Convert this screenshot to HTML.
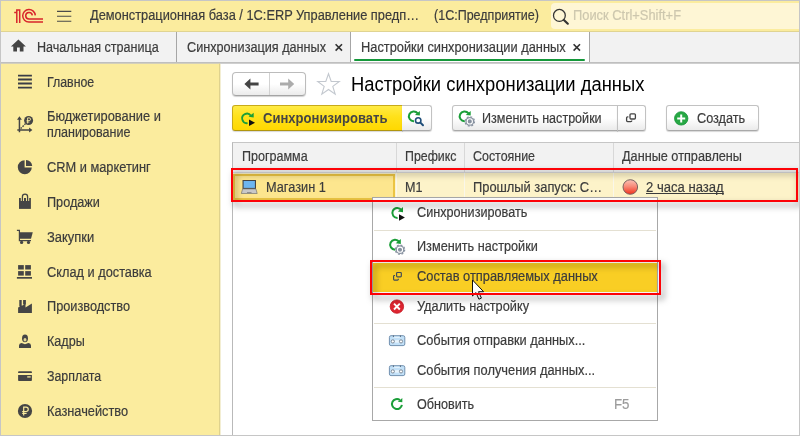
<!DOCTYPE html>
<html lang="ru">
<head>
<meta charset="utf-8">
<title>Настройки синхронизации данных</title>
<style>
*{box-sizing:border-box;margin:0;padding:0}
html,body{width:800px;height:436px;overflow:hidden;background:#fff}
body{font-family:"Liberation Sans",sans-serif;font-size:14px;color:#3c3c3c;position:relative}
.a{position:absolute}
.t{position:absolute;white-space:nowrap;line-height:16px;transform-origin:0 50%;-webkit-text-stroke:.2px currentColor}
#frame{position:absolute;left:0;top:0;width:800px;height:436px;border:1px solid #c6c6c6;pointer-events:none}
#title{position:absolute;left:1px;top:1px;width:798px;height:31px;background:#fbec9e;border-bottom:1px solid #e0d492}
#search{position:absolute;left:551px;top:3px;width:248px;height:26px;background:#fef6d5;border-radius:4px 0 0 4px}
#tabs{position:absolute;left:1px;top:32px;width:798px;height:31px;background:#f2f2f2;border-bottom:1px solid #bfbfbf}
.sep{position:absolute;top:32px;width:1px;height:30px;background:#a6a6a6}
#tab3{position:absolute;left:351px;top:32px;width:238px;height:30px;background:#fff}
#green{position:absolute;left:354px;top:59px;width:231px;height:2px;background:#14983a;border-radius:1px}
#side{position:absolute;left:1px;top:63px;width:219px;height:372px;background:#fbec9e;border-right:1px solid #dfd28e;border-top:1px solid #d3cfbb}
.btn{position:absolute;top:105px;height:26px;border:1px solid #c2c2c2;border-bottom-color:#a9a9a9;border-radius:3px;background:linear-gradient(#ffffff,#ffffff 50%,#ebebeb);box-shadow:0 1px 1px rgba(0,0,0,.16)}
.red{position:absolute;border:2px solid #fd0207;filter:drop-shadow(3px 4px 3px rgba(0,0,0,.5))}
</style>
</head>
<body>
<!-- title bar -->
<div id="title"></div>
<div id="search"></div>
<!-- tabs -->
<div id="tabs"></div>
<div id="tab3"></div>
<div class="sep" style="left:176px"></div>
<div class="sep" style="left:350px"></div>
<div class="sep" style="left:589px"></div>
<div id="green"></div>
<!-- sidebar -->
<div id="side"></div>
<div class="a" style="left:220px;top:63px;width:579px;height:1px;background:#cfcfcf"></div>
<div class="a" style="left:220px;top:64px;width:1px;height:371px;background:#f3eed3"></div>

<!-- nav buttons -->
<div class="a" style="left:232px;top:72px;width:74px;height:24px;border:1px solid #bcbcbc;border-bottom-color:#a4a4a4;border-radius:4px;background:linear-gradient(#fff,#fff 50%,#ebebeb);box-shadow:0 1px 1px rgba(0,0,0,.18)"></div>
<div class="a" style="left:269px;top:73px;width:1px;height:22px;background:#d2d2d2"></div>

<!-- toolbar buttons -->
<div class="btn" style="left:232px;width:171px;background:linear-gradient(#ffeb45,#ffe11a 45%,#ffd800);border-color:#c7aa1a;border-bottom-color:#b0950e;border-radius:3px 0 0 3px"></div>
<div class="btn" style="left:402px;width:30px;border-radius:0 3px 3px 0;border-left:none"></div>
<div class="btn" style="left:452px;width:166px;border-radius:3px 0 0 3px"></div>
<div class="btn" style="left:617px;width:29px;border-radius:0 3px 3px 0"></div>
<div class="btn" style="left:666px;width:93px"></div>

<!-- table -->
<div class="a" style="left:232px;top:142px;width:567px;height:294px;border:1px solid #b9b9b9;border-top-color:#c6c6c6;border-right:none;background:#fff"></div>
<div class="a" style="left:233px;top:143px;width:566px;height:30px;background:#f2f2f2;border-bottom:1px solid #d9d9d9"></div>
<div class="a" style="left:233px;top:173px;width:566px;height:27px;background:#fdf3c9"></div>
<div class="a" style="left:396px;top:143px;width:1px;height:29px;background:#d8d8d8"></div><div class="a" style="left:396px;top:173px;width:1px;height:27px;background:#faf7ea"></div>
<div class="a" style="left:464px;top:143px;width:1px;height:29px;background:#d8d8d8"></div><div class="a" style="left:464px;top:173px;width:1px;height:27px;background:#faf7ea"></div>
<div class="a" style="left:613px;top:143px;width:1px;height:29px;background:#d8d8d8"></div><div class="a" style="left:613px;top:173px;width:1px;height:27px;background:#faf7ea"></div>
<div class="a" style="left:233px;top:174px;width:162px;height:26px;background:#fde68e;border:2px solid #ebc443"></div>


<!-- context menu -->
<div class="a" style="left:372px;top:197px;width:286px;height:224px;background:#fff;border:1px solid #a8a8a8"></div>
<div class="a" style="left:374px;top:230px;width:282px;height:1px;background:#e4e0d2"></div>
<div class="a" style="left:374px;top:323px;width:282px;height:1px;background:#e4e0d2"></div>
<div class="a" style="left:374px;top:387px;width:282px;height:1px;background:#e4e0d2"></div>
<div class="a" style="left:373px;top:263px;width:284px;height:29px;background:#f9ce24"></div>

<div class="t" style="left:90px;top:7px;transform:scaleX(0.9152);">Демонстрационная база / 1С:ERP Управление предп…</div>
<div class="t" style="left:434px;top:7px;transform:scaleX(0.8943);">(1С:Предприятие)</div>
<div class="t" style="left:573px;top:7px;transform:scaleX(0.9201);color:#cdc7ae">Поиск Ctrl+Shift+F</div>
<div class="t" style="left:37px;top:39px;transform:scaleX(0.8987);">Начальная страница</div>
<div class="t" style="left:187px;top:39px;transform:scaleX(0.9039);">Синхронизация данных</div>
<div class="t" style="left:361px;top:39px;transform:scaleX(0.9156);">Настройки синхронизации данных</div>
<div class="t" style="left:47.3px;top:74px;transform:scaleX(0.8822);">Главное</div>
<div class="t" style="left:47.3px;top:108px;transform:scaleX(0.9166);">Бюджетирование и</div>
<div class="t" style="left:47.3px;top:124px;transform:scaleX(0.8960);">планирование</div>
<div class="t" style="left:47.3px;top:159px;transform:scaleX(0.9148);">CRM и маркетинг</div>
<div class="t" style="left:47.3px;top:194px;transform:scaleX(0.9048);">Продажи</div>
<div class="t" style="left:47.3px;top:229px;transform:scaleX(0.9244);">Закупки</div>
<div class="t" style="left:47.3px;top:264px;transform:scaleX(0.9122);">Склад и доставка</div>
<div class="t" style="left:47.3px;top:298px;transform:scaleX(0.9093);">Производство</div>
<div class="t" style="left:47.3px;top:333px;transform:scaleX(0.8983);">Кадры</div>
<div class="t" style="left:47.3px;top:368px;transform:scaleX(0.8840);">Зарплата</div>
<div class="t" style="left:47.3px;top:403px;transform:scaleX(0.9133);">Казначейство</div>
<div class="t" style="left:351px;top:72px;transform:scaleX(0.9191);font-size:20px;line-height:24px;color:#000;-webkit-text-stroke:0">Настройки синхронизации данных</div>
<div class="t" style="left:262.5px;top:110px;transform:scaleX(0.9321);font-weight:bold;color:#454545;-webkit-text-stroke:0">Синхронизировать</div>
<div class="t" style="left:482.25px;top:110px;transform:scaleX(0.8975);">Изменить настройки</div>
<div class="t" style="left:696.5px;top:110px;transform:scaleX(0.9066);">Создать</div>
<div class="t" style="left:241.9px;top:148px;transform:scaleX(0.8956);">Программа</div>
<div class="t" style="left:404.5px;top:148px;transform:scaleX(0.8839);">Префикс</div>
<div class="t" style="left:473px;top:148px;transform:scaleX(0.8875);">Состояние</div>
<div class="t" style="left:622px;top:148px;transform:scaleX(0.9064);">Данные отправлены</div>
<div class="t" style="left:265.7px;top:179px;transform:scaleX(0.9104);">Магазин 1</div>
<div class="t" style="left:404.5px;top:179px;transform:scaleX(0.8996);">М1</div>
<div class="t" style="left:473px;top:179px;transform:scaleX(0.9185);">Прошлый запуск: С…</div>
<div class="t" style="left:646px;top:179px;transform:scaleX(0.9348);text-decoration:underline;text-decoration-skip-ink:none">2 часа назад</div>
<div class="t" style="left:416.7px;top:204px;transform:scaleX(0.9036);">Синхронизировать</div>
<div class="t" style="left:416.7px;top:238px;transform:scaleX(0.9061);">Изменить настройки</div>
<div class="t" style="left:416.7px;top:268px;transform:scaleX(0.9176);">Состав отправляемых данных</div>
<div class="t" style="left:416.7px;top:298px;transform:scaleX(0.9113);">Удалить настройку</div>
<div class="t" style="left:416.7px;top:332px;transform:scaleX(0.9139);">События отправки данных...</div>
<div class="t" style="left:416.7px;top:362px;transform:scaleX(0.9177);">События получения данных...</div>
<div class="t" style="left:416.7px;top:396px;transform:scaleX(0.9000);">Обновить</div>
<div class="t" style="left:613.5px;top:396px;transform:scaleX(0.9484);color:#9b9b9b">F5</div>

<!-- icons -->
<svg class="a" style="left:0;top:0" width="800" height="436" viewBox="0 0 800 436">
<defs>
<linearGradient id="rb" x1="0" y1="0" x2="0" y2="1"><stop offset="0" stop-color="#fbc3b6"/><stop offset=".45" stop-color="#f88c7a"/><stop offset="1" stop-color="#f2311c"/></linearGradient>
</defs>
<!-- 1C logo -->
<g fill="none" stroke="#d8252b" stroke-width="1.5">
<path d="M14.2 12.4H16.8M16.8 22.9V9.9H19.7V22.9"/>
<path d="M35.3 15.4A6.3 6.3 0 1 0 28.9 22.1H43"/>
<path d="M32.3 15.4A3.3 3.3 0 1 0 29 19H43"/>
</g>
<!-- hamburger -->
<path d="M57 11.3H71.3M57 16.2H71.3M57 21.2H71.3" stroke="#4a4a4a" stroke-width="1.15"/>
<!-- search -->
<circle cx="559.4" cy="15.4" r="5.9" fill="none" stroke="#333" stroke-width="1.25"/>
<path d="M563.9 20L567.8 23.7" stroke="#333" stroke-width="2.2" stroke-linecap="round"/>
<!-- home -->
<path d="M18.4 39.6L10.9 46.5H13.3V51.6H17V47.6H19.8V51.6H23.5V46.5H25.9Z" fill="#444"/>
<!-- tab x -->
<path d="M335.6 44.2L342 50.6M342 44.2L335.6 50.6" stroke="#333" stroke-width="1.6"/>
<path d="M573.6 44.2L580 50.6M580 44.2L573.6 50.6" stroke="#333" stroke-width="1.6"/>

<!-- sidebar icons -->
<g fill="#454545" stroke="none">
<path d="M18 74.7H31.9V76.5H18ZM18 78.6H31.9V80.4H18ZM18 82.6H31.9V84.4H18ZM18 86.7H31.9V88.5H18Z" fill="#3a3d46"/>
<!-- budget -->
<path d="M18.7 118.5H20.2V132.2H18.7ZM17 119.8L19.45 116.2L21.9 119.8ZM17.3 129.3H29.8V130.8H17.3ZM29.1 127.6L32.4 130.05L29.1 132.5Z"/>
<circle cx="28.6" cy="120.5" r="4.5"/>
<!-- pie -->
<path d="M24.6 167.4V160.2A7 7 0 1 0 31.8 167.4Z"/>
<path d="M26 166V160A6.2 6.2 0 0 1 32.2 166Z"/>
<!-- bag -->
<rect x="19" y="198" width="11.9" height="10.9"/>
<!-- cart -->
<path d="M19.4 232.2H32.8L31 238.8H19.4Z"/>
<circle cx="21.6" cy="242.4" r="1.6"/><circle cx="28.5" cy="242.4" r="1.6"/>
<!-- grid -->
<rect x="18.1" y="265.1" width="5.7" height="4.4"/><rect x="25.2" y="265.1" width="5.7" height="4.4"/>
<rect x="18.1" y="271.1" width="5.7" height="4.5"/><rect x="25.2" y="271.1" width="5.7" height="4.5"/>
<rect x="16.9" y="277" width="15.1" height="1.7"/>
<!-- factory -->
<path d="M19.3 300H21.7V306.5H19.3ZM23.1 300H25.9V304.5H23.1ZM18.1 313V307.6L25.5 304V307.6L31.9 303.4V313Z"/>
<!-- person -->
<ellipse cx="25" cy="338.3" rx="3" ry="3.9"/>
<path d="M19 348V345.4Q19 343.2 21.6 342.9L25 344.2L28.4 342.9Q31 343.2 31 345.4V348Z"/>
<!-- card -->
<path d="M18.1 373.1V372.1Q18.1 371.3 18.9 371.3H31.1Q31.9 371.3 31.9 372.1V373.1Z"/>
<path d="M18.1 375.1H31.9V380.2Q31.9 381 31.1 381H18.9Q18.1 381 18.1 380.2Z"/>
<!-- ruble -->
<circle cx="25" cy="411" r="7.1"/>
</g>
<g fill="none">
<path d="M20.6 128.6L25.4 123.8" stroke="#454545" stroke-width="1.4" stroke-dasharray="1.7 1"/>
<path d="M27.6 123.4V117.9H29.2A1.35 1.35 0 0 1 29.2 120.6H26.6M26.6 122H29.4" stroke="#fbec9e" stroke-width=".9"/>
<path d="M22.4 201V196.8A2.6 2.6 0 0 1 27.6 196.8V201" stroke="#fbec9e" stroke-width="3.2"/>
<path d="M22.4 201.5V196.8A2.6 2.6 0 0 1 27.6 196.8V201.5" stroke="#454545" stroke-width="1.3"/>
<path d="M16.9 230.4H19.4V240.6H31" stroke="#454545" stroke-width="1.2"/>
<ellipse cx="25" cy="339.8" rx="1.5" ry="1.7" fill="#e4d793" stroke="none"/>
<rect x="27.2" y="376.2" width="3.5" height="1.4" fill="#e8db96" stroke="none"/>
<path d="M23.7 415.4V407.2H26.1A2.15 2.15 0 0 1 26.1 411.5H22.2M22.2 413.4H26.6" stroke="#fbec9e" stroke-width="1.2"/>
</g>

<!-- nav arrows -->
<path d="M244.4 84L250.4 78.6V82.5H258.6V85.5H250.4V89.4Z" fill="#444"/>
<path d="M294.2 84L288.2 78.6V82.5H280V85.5H288.2V89.4Z" fill="#acacac"/>
<!-- star -->
<path d="M328.5 73.7L331.2 81.4L339.3 81.5L332.8 86.4L335.2 94.2L328.5 89.5L321.8 94.2L324.2 86.4L317.7 81.5L325.8 81.4Z" fill="#fff" stroke="#c3c8cf" stroke-width="1.1" stroke-linejoin="miter"/>

<!-- sync icon (yellow button) -->
<g fill="none" stroke="#1a9e38" stroke-width="1.8">
<path d="M247.6 123.2A4.8 4.8 0 1 1 250.9 115.7"/>
</g>
<path d="M253.7 112.8V117.4L248.6 116.8Z" fill="#1a9e38"/>
<path d="M249 119.4V126L255 122.7Z" fill="#111"/>
<!-- refresh-search icon -->
<path d="M414 121.2A4.9 4.9 0 1 1 417.7 113.4" fill="none" stroke="#1a9e38" stroke-width="2"/>
<path d="M419.9 110.9V115.6L414.9 115Z" fill="#1a9e38"/>
<circle cx="418.2" cy="120.4" r="2.7" fill="#fff" stroke="#1f4e79" stroke-width="1.6"/>
<path d="M420.4 122.6L423 125.3" stroke="#1f4e79" stroke-width="2" stroke-linecap="round"/>
<!-- refresh-gear icon -->
<path d="M464.8 121.2A4.9 4.9 0 1 1 468.5 113.4" fill="none" stroke="#1a9e38" stroke-width="2"/>
<path d="M470.7 110.9V115.6L465.7 115Z" fill="#1a9e38"/>
<g><circle cx="469.8" cy="121.4" r="4.4" fill="#8892a0"/><circle cx="469.8" cy="121.4" r="4.7" fill="none" stroke="#8892a0" stroke-width="1.2" stroke-dasharray="1.9 1.79"/><circle cx="469.8" cy="121.4" r="2.6" fill="none" stroke="#fff" stroke-width="1.1"/></g>
<!-- copy icon -->
<g fill="none" stroke="#444" stroke-width="1.3">
<rect x="630" y="113.8" width="5.4" height="5.2" rx="1"/>
<path d="M628.4 116.8H627.6A1 1 0 0 0 626.6 117.8V120.6A1 1 0 0 0 627.6 121.6H630.8A1 1 0 0 0 631.8 120.6V120.4"/>
</g>
<!-- green plus -->
<circle cx="681.2" cy="118.4" r="6.7" fill="#27a844" stroke="#17933a" stroke-width=".8"/>
<path d="M677.2 118.4H685.2M681.2 114.4V122.4" stroke="#fff" stroke-width="2"/>
<!-- laptop -->
<rect x="242.5" y="180" width="13.5" height="8.9" fill="#444"/>
<rect x="243.6" y="181" width="11.3" height="6.9" fill="#6db5ef"/>
<path d="M242.6 188.9H255.9L257.2 193.5H241.3Z" fill="#c8c8c8" stroke="#666" stroke-width=".6"/>
<path d="M247 192.6H251.5" stroke="#777" stroke-width=".8"/>
<!-- red ball -->
<circle cx="630.3" cy="187" r="7.3" fill="url(#rb)" stroke="#7b6363" stroke-width="1"/>

<!-- menu icons -->
<path d="M397.6 217.9A5 5 0 1 1 401.4 210" fill="none" stroke="#1a9e38" stroke-width="2"/>
<path d="M403 207.1V212.2L397.9 211.6Z" fill="#1a9e38"/>
<path d="M399 214.2V220.7L404.9 217.4Z" fill="#111"/>
<path d="M395.3 249.7A5 5 0 1 1 399.2 241.8" fill="none" stroke="#1a9e38" stroke-width="2"/>
<path d="M400.8 238.9V243.9L395.7 243.3Z" fill="#1a9e38"/>
<g transform="translate(-69.8 128.3)"><circle cx="469.8" cy="121.4" r="4.4" fill="#8892a0"/><circle cx="469.8" cy="121.4" r="4.7" fill="none" stroke="#8892a0" stroke-width="1.2" stroke-dasharray="1.9 1.79"/><circle cx="469.8" cy="121.4" r="2.6" fill="none" stroke="#fff" stroke-width="1.1"/></g>
<g fill="none" stroke="#3e4959" stroke-width="1.15">
<rect x="396.6" y="272.5" width="4.7" height="4.4" rx=".8"/>
<path d="M395 275.5H394.4A.8 .8 0 0 0 393.6 276.3V279.3A.8 .8 0 0 0 394.4 280.1H397.5A.8 .8 0 0 0 398.3 279.3V278.8"/>
</g>
<circle cx="396.9" cy="306.6" r="6.7" fill="#dd2531" stroke="#c3131d" stroke-width=".8"/>
<path d="M394 303.7L399.8 309.5M399.8 303.7L394 309.5" stroke="#fff" stroke-width="1.9"/>
<g>
<rect x="389.4" y="335.7" width="15.4" height="9.9" rx="1.6" fill="#c2e0f7" stroke="#7291b0" stroke-width="1"/>
<path d="M393.4 335.4V337M400.4 335.4V337" stroke="#5b6b7c" stroke-width="1"/>
<path d="M394.2 337.3H399.8" stroke="#eaf5fd" stroke-width="1"/>
<rect x="394.8" y="340.2" width="4.2" height="2.4" fill="#e9f4fc"/>
<circle cx="392.8" cy="341.4" r="1.6" fill="#fff" stroke="#7f8b98" stroke-width="1"/>
<circle cx="401" cy="341.4" r="1.6" fill="#fff" stroke="#7f8b98" stroke-width="1"/>
</g>
<g transform="translate(0 30)">
<rect x="389.4" y="335.7" width="15.4" height="9.9" rx="1.6" fill="#c2e0f7" stroke="#7291b0" stroke-width="1"/>
<path d="M393.4 335.4V337M400.4 335.4V337" stroke="#5b6b7c" stroke-width="1"/>
<path d="M394.2 337.3H399.8" stroke="#eaf5fd" stroke-width="1"/>
<rect x="394.8" y="340.2" width="4.2" height="2.4" fill="#e9f4fc"/>
<circle cx="392.8" cy="341.4" r="1.6" fill="#fff" stroke="#7f8b98" stroke-width="1"/>
<circle cx="401" cy="341.4" r="1.6" fill="#fff" stroke="#7f8b98" stroke-width="1"/>
</g>
<path d="M401.9 404.8A5 5 0 1 1 399.9 400" fill="none" stroke="#1a9e38" stroke-width="2"/>
<path d="M402.3 397.9V402.2L397.8 401.8Z" fill="#1a9e38"/>
<!-- cursor -->
<path d="M472.5 280V296L476 292.6L478.9 299.2L481.4 298.1L478.5 291.7H483.6Z" fill="#fff" stroke="#111" stroke-width="1" stroke-linejoin="round"/>
</svg>

<!-- red highlights -->
<div class="red" style="left:231px;top:168px;width:567px;height:34px"></div>
<div class="red" style="left:370px;top:260px;width:291px;height:35px"></div>

<div id="frame"></div>
</body>
</html>
